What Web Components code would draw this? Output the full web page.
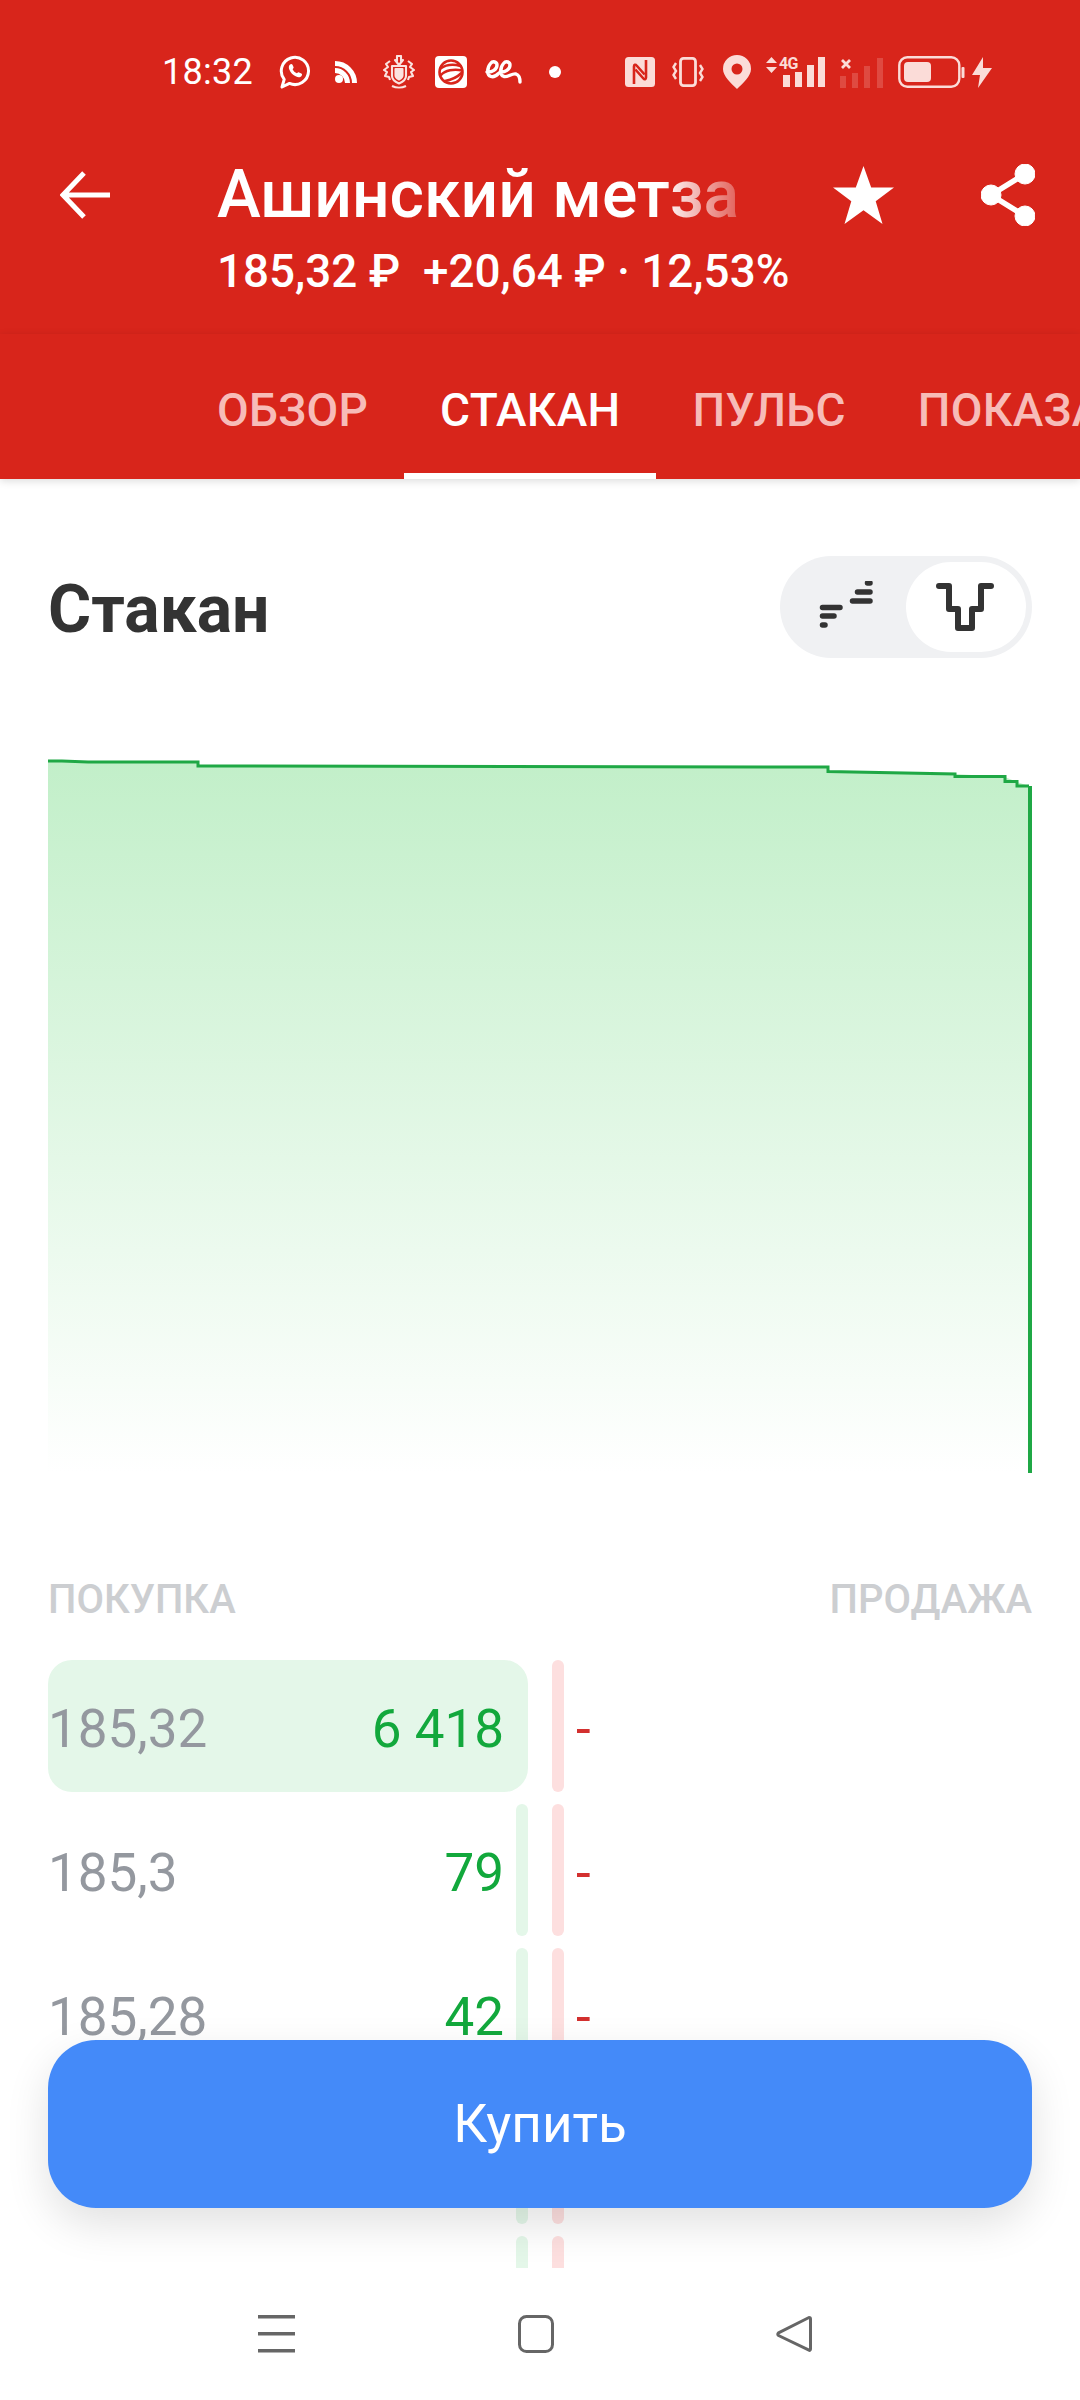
<!DOCTYPE html>
<html lang="ru">
<head>
<meta charset="utf-8">
<title>Стакан</title>
<style>
  html, body { margin: 0; padding: 0; background: #fff; }
  body { width: 1080px; height: 2400px; overflow: hidden; font-family: Roboto, "Liberation Sans", sans-serif; }
</style>
</head>
<body>
<stock-screen>
  <status-bar></status-bar>
  <stock-header name="Ашинский метза" quote="185,32 ₽&#160;&#160;+20,64 ₽ · 12,53%"></stock-header>
  <tab-bar tabs="ОБЗОР,СТАКАН,ПУЛЬС,ПОКАЗА" active="1"></tab-bar>
  <book-title>Стакан</book-title>
  <depth-chart></depth-chart>
  <order-book>
    <order-row price="185,32" qty="6 418" fill="100"></order-row>
    <order-row price="185,3" qty="79" fill="2.5"></order-row>
    <order-row price="185,28" qty="42" fill="2.5"></order-row>
    <order-row fill="2.5"></order-row>
    <order-row fill="2.5"></order-row>
  </order-book>
  <buy-button>Купить</buy-button>
  <nav-bar></nav-bar>
</stock-screen>

<script>
  class StockScreen extends HTMLElement {
    constructor() {
      super();
      this.attachShadow({ mode: 'open' });
      this.shadowRoot.innerHTML = `
        <style>
          :host { display: flex; flex-direction: column; position: relative; width: 1080px; height: 2400px; overflow: hidden; background: #fff; }
        </style>
        <slot></slot>`;
    }
  }

  class StatusBar extends HTMLElement {
    constructor() {
      super();
      this.attachShadow({ mode: 'open' });
      this.shadowRoot.innerHTML = `
        <style>
          :host { display: flex; align-items: center; height: 150px; padding: 0 0 6px 162px; box-sizing: border-box; background: #d8251b; color: #fff; }
          .bar { display: flex; align-items: center; }
          .time { font: 400 36px/1 Roboto, sans-serif; width: 90px; letter-spacing: .3px; }
          svg { display: block; flex: none; }
          .pale { color: #fbdcd8; }
        </style>
        <div class="bar">
          <span class="time">18:32</span>
          <!-- whatsapp -->
          <svg style="margin-left:27px" width="32" height="34" viewBox="0 0 32 34" fill="none" stroke="#fff">
            <path d="M3 32l2.200-7.700A13.600 13.600 0 1 1 10.500 28.400z" stroke-width="3" stroke-linejoin="round"/>
            <path d="M11 9.500c1-.9 2-.8 2.500.2l1 2.300c.3.700 0 1.200-.9 2.200.9 1.800 2.300 3.200 4.300 4.100 1-.9 1.600-1.300 2.200-.9l2.300 1.200c.8.500.9 1.300.2 2.300-1.300 1.600-3.300 1.700-5.500.700-3.200-1.400-5.600-3.900-6.800-7-.7-2-.7-3.700.7-5.100z" fill="#fff" stroke="none"/>
          </svg>
          <!-- feed -->
          <svg style="margin-left:24px" width="22" height="22" viewBox="0 0 22 22" fill="none" stroke="#fff" stroke-width="5">
            <circle cx="4" cy="18" r="4" fill="#fff" stroke="none"/>
            <path d="M0 9.500a12.500 12.500 0 0 1 12.500 12.500"/>
            <path d="M0 2.500a19.500 19.500 0 0 1 19.500 19.500"/>
          </svg>
          <!-- bank crest -->
          <svg style="margin-left:26px" width="32" height="34" viewBox="0 0 32 34" fill="none" stroke="#fbe3e0" stroke-width="2.100" stroke-linejoin="round">
            <path d="M14 1h4v5l2-1-4 5-4-5 2 1z"/>
            <path d="M9 11h14v10c0 4-3.500 6-7 7.500-3.500-1.500-7-3.500-7-7.500z"/>
            <path d="M12.500 14h7v6.500c0 2-1.800 3-3.500 4-1.700-1-3.500-2-3.500-4z" fill="#fbe3e0"/>
            <path d="M7 6L3 9l2 3-4 3 3 2-2 4 4 1 1 3M25 6l4 3-2 3 4 3-3 2 2 4-4 1-1 3"/>
            <path d="M9 31c4 2 10 2 14 0"/>
          </svg>
          <!-- ball tile -->
          <svg style="margin-left:20px" width="32" height="32" viewBox="0 0 32 32">
            <rect width="32" height="32" rx="4" fill="#fff"/>
            <g fill="none" stroke="#d8251b" stroke-width="2.600" stroke-linecap="round">
              <circle cx="16" cy="16" r="11.500"/>
              <path d="M5.500 12.500c5-3.500 13-4.500 20-2.500"/>
              <path d="M6 19c4-4.500 13-6.500 21-4.500"/>
              <path d="M10 25c5-1 12-3.500 16.500-8"/>
            </g>
          </svg>
          <!-- script logo -->
          <svg style="margin-left:18px" width="37" height="26" viewBox="0 0 37 26" fill="none" stroke="#fff" stroke-width="3.400" stroke-linecap="round" stroke-linejoin="round">
            <path d="M2 13c5 .5 10-2.500 10-7 0-3-4-4.500-6.500-1.500C2 8.500 1.500 16 6 17.500c3 1 5.500-1 7.500-3"/>
            <path d="M15 13c5 .5 10-2.500 10-7 0-3-4-4.500-6.500-1.500C15 8.500 14.500 16 19 17.500c4 1 8-3.500 12-2.500 3 1 4 4 4 8"/>
          </svg>
          <svg style="margin-left:27px" width="12" height="12" viewBox="0 0 12 12"><circle cx="6" cy="6" r="6" fill="#fff"/></svg>
          <!-- nfc -->
          <svg class="pale" style="margin-left:64px" width="30" height="30" viewBox="0 0 30 30">
            <rect width="30" height="30" rx="3.500" fill="currentColor"/>
            <g fill="none" stroke="#d8251b" stroke-width="2.600">
              <path d="M9 27V9.500c0-1.800 1.500-2.300 2.600-1l8 9"/>
              <path d="M21 3v17.500c0 1.800-1.500 2.300-2.600 1l-8-9"/>
            </g>
          </svg>
          <!-- vibrate -->
          <svg class="pale" style="margin-left:17px" width="32" height="30" viewBox="0 0 32 30" fill="none" stroke="currentColor" stroke-width="2.800">
            <rect x="8.500" y="1.400" width="15" height="27.200" rx="3"/>
            <path d="M4 6L1.500 10 4 14 1.500 18 4 22M28 8l2.500 4-2.500 4 2.500 4-2.500 4" stroke-width="2.400"/>
          </svg>
          <!-- location -->
          <svg class="pale" style="margin-left:19px" width="28" height="34" viewBox="0 0 28 34">
            <path fill-rule="evenodd" fill="currentColor" d="M14 0a14 14 0 0 1 14 14c0 7-8 14.500-14 20C8 28.500 0 21 0 14A14 14 0 0 1 14 0zm0 8.500a5.500 5.500 0 1 0 0 11 5.500 5.500 0 0 0 0-11z"/>
          </svg>
          <!-- sim one -->
          <signal-mobile style="margin-left:15px"></signal-mobile>
          <!-- sim two, no service -->
          <svg style="margin-left:14px" width="43" height="32" viewBox="0 0 43 32">
            <g fill="#fbdcd8" opacity=".2">
              <rect x="0" y="20" width="6" height="12"/><rect x="12" y="17" width="6" height="15"/><rect x="24" y="10" width="6" height="22"/><rect x="37" y="2" width="6" height="30"/>
            </g>
            <path d="M2 4l8 8M10 4l-8 8" stroke="#fbdcd8" stroke-width="2.800"/>
          </svg>
          <!-- battery -->
          <svg class="pale" style="margin-left:15px" width="68" height="32" viewBox="0 0 68 32">
            <rect x="1.300" y="1.300" width="60" height="29.400" rx="8" fill="none" stroke="currentColor" stroke-width="2.400"/>
            <rect x="6" y="6" width="27" height="20" rx="4" fill="currentColor"/>
            <rect x="63.500" y="11" width="3" height="11" rx="1" fill="currentColor"/>
          </svg>
          <svg class="pale" style="margin-left:6px" width="20" height="31" viewBox="0 0 20 31"><path fill="currentColor" d="M11 0L0 18h8l-2 13 14-20h-9z"/></svg>
        </div>`;
    }
  }

  // Data-type arrows, the 4G mark and the level bars of the first sim
  class SignalMobile extends HTMLElement {
    constructor() {
      super();
      this.attachShadow({ mode: 'open' });
      this.shadowRoot.innerHTML = `
        <style>
          :host { display: grid; grid-template-columns: 13px 47px; grid-template-rows: 13px 17px; width: 60px; height: 30px; color: #fbdcd8; flex: none; }
          .arrows { grid-row: 1 / 3; }
          .type { font: 700 16px/13px Roboto, sans-serif; letter-spacing: -.6px; grid-column: 2; grid-row: 1; }
          svg { display: block; }
          .bars { grid-column: 2; grid-row: 1 / 3; }
        </style>
        <svg class="arrows" width="11" height="16" viewBox="0 0 11 16" fill="currentColor"><path d="M5.500 0L11 6H0zM5.500 16L0 10h11z"/></svg>
        <span class="type">4G</span>
        <svg class="bars" width="47" height="30" viewBox="0 0 47 30" fill="currentColor">
          <rect x="4" y="18" width="7" height="12"/><rect x="16" y="15" width="7" height="15"/><rect x="28" y="8" width="7" height="22"/><rect x="39" y="0" width="7" height="30"/>
        </svg>`;
    }
  }

  class StockHeader extends HTMLElement {
    constructor() {
      super();
      this.attachShadow({ mode: 'open' });
    }
    connectedCallback() {
      this.shadowRoot.innerHTML = `
        <style>
          :host { display: grid; grid-template-columns: 217px 524px 92px 61px 146px 1fr; grid-template-rows: 90px 64px; height: 184px; align-content: start; background: #d8251b; color: #fff; font-family: Roboto, sans-serif; }
          .back { grid-row: 1; align-self: center; margin-left: 60px; }
          .name { font-size: 66px; font-weight: 500; line-height: 90px; white-space: nowrap; overflow: hidden; -webkit-mask-image: linear-gradient(90deg, #000 85%, rgba(0,0,0,.3) 99%); mask-image: linear-gradient(90deg, #000 85%, rgba(0,0,0,.3) 99%); }
          .quote { grid-column: 2 / 7; grid-row: 2; font-size: 45.800px; font-weight: 500; line-height: 64px; white-space: nowrap; }
          .star { grid-column: 4; grid-row: 1; align-self: center; }
          .share { grid-column: 5; grid-row: 1; align-self: center; margin-left: 87px; }
          svg { display: block; }
        </style>
        <svg class="back" width="50" height="48" viewBox="0 0 50 48" fill="none" stroke="#fff" stroke-width="5"><path d="M24 2L3 24l21 22M3 24h47"/></svg>
        <div class="name">${this.getAttribute('name')}</div>
        <svg class="star" width="61" height="58" viewBox="0 0 61 58"><path fill="#fff" d="M30.500 0l7.700 21.500H61L42.700 35.300 49.500 58 30.500 44.300 11.500 58l6.800-22.700L0 21.500h22.800z"/></svg>
        <svg class="share" width="54" height="62" viewBox="0 0 54 62" fill="#fff" stroke="#fff">
          <path d="M44 10L10 31l34 21" fill="none" stroke-width="5.500"/>
          <circle cx="44" cy="10" r="10"/><circle cx="10" cy="31" r="10"/><circle cx="44" cy="52" r="10"/>
        </svg>
        <div class="quote">${this.getAttribute('quote')}</div>`;
    }
  }

  class TabBar extends HTMLElement {
    constructor() {
      super();
      this.attachShadow({ mode: 'open' });
    }
    connectedCallback() {
      const active = Number(this.getAttribute('active'));
      const tabs = this.getAttribute('tabs').split(',').map((label, i) =>
        `<div class="tab${i === active ? ' on' : ''}">${label}</div>`).join('');
      this.shadowRoot.innerHTML = `
        <style>
          :host { display: flex; height: 145px; padding-left: 181px; overflow: hidden; background: #d8251b; box-shadow: 0 2px 8px rgba(0,0,0,.14); position: relative; z-index: 1; font-family: Roboto, sans-serif; }
          .tab { flex: none; box-sizing: border-box; height: 145px; padding: 50px 36px 0; font-size: 46px; font-weight: 500; line-height: 52px; letter-spacing: .3px; color: #f7bcb8; white-space: nowrap; border-bottom: 6px solid transparent; }
          .tab.on { color: #fff; border-bottom-color: #fff; }
        </style>
        ${tabs}`;
    }
  }

  class BookTitle extends HTMLElement {
    constructor() {
      super();
      this.attachShadow({ mode: 'open' });
      this.shadowRoot.innerHTML = `
        <style>
          :host { display: flex; justify-content: space-between; align-items: center; margin: 77px 48px 0; height: 102px; font: 700 66px/1 Roboto, sans-serif; color: #333; }
          .label { padding-top: 5px; }
          .toggle { display: flex; align-items: center; justify-content: space-between; width: 252px; height: 102px; box-sizing: border-box; padding: 6px; border-radius: 51px; background: #f0f1f3; }
          .mode { display: flex; align-items: center; justify-content: center; width: 120px; height: 90px; border-radius: 45px; }
          .mode.on { background: #fff; }
          svg { display: block; }
        </style>
        <div class="label"><slot></slot></div>
        <div class="toggle">
          <div class="mode">
            <svg width="56" height="52" viewBox="0 0 56 52" stroke="#333" stroke-width="5.500" stroke-linecap="round" fill="none">
              <path d="M4.500 26.500H22M4.500 35H16M4.500 44H7M34.500 20H52M39.500 11H52M49.500 2H52"/>
            </svg>
          </div>
          <div class="mode on">
            <svg width="58" height="48" viewBox="0 0 58 48" stroke="#333" stroke-width="6" stroke-linecap="round" stroke-linejoin="round" fill="none" style="margin-left:-2px">
              <path d="M3 3H13V26H22V45H36V26H45V3H55"/>
            </svg>
          </div>
        </div>`;
    }
  }

  class DepthChart extends HTMLElement {
    constructor() {
      super();
      this.attachShadow({ mode: 'open' });
      this.shadowRoot.innerHTML = `
        <style>
          :host { display: block; margin: 98px 48px 0; height: 720px; }
          svg { display: block; }
        </style>
        <svg width="984" height="720" viewBox="0 0 984 720">
          <defs>
            <linearGradient id="bidFill" x1="0" y1="0" x2="0" y2="1">
              <stop offset="0" stop-color="#c2efc9"/>
              <stop offset="1" stop-color="#ffffff"/>
            </linearGradient>
          </defs>
          <path fill="url(#bidFill)" d="M0 5L150 6 152 10 780 11 782 16 907 18 957 21 969 26 981 30V717H0z"/>
          <path fill="none" stroke="#1fa845" stroke-width="3" d="M0 5L14 5 40 6 150 6V10L780 11V15.500L907 18V20.500H957V25.500H969V30H981"/>
          <path fill="none" stroke="#1fa845" stroke-width="4" d="M982 30V717"/>
        </svg>`;
    }
  }

  class OrderBook extends HTMLElement {
    constructor() {
      super();
      this.attachShadow({ mode: 'open' });
      this.shadowRoot.innerHTML = `
        <style>
          :host { display: block; margin: 99px 48px 0; height: 693px; overflow: hidden; font-family: Roboto, sans-serif; }
          .heads { display: flex; justify-content: space-between; height: 47px; line-height: 49px; font-size: 40px; font-weight: 500; color: #ccced1; margin-bottom: 38px; }
          .rows { display: flex; flex-direction: column; gap: 12px; }
        </style>
        <div class="heads"><span>ПОКУПКА</span><span>ПРОДАЖА</span></div>
        <div class="rows"><slot></slot></div>`;
    }
  }

  class OrderRow extends HTMLElement {
    constructor() {
      super();
      this.attachShadow({ mode: 'open' });
    }
    connectedCallback() {
      const fill = this.getAttribute('fill');
      const price = this.getAttribute('price');
      // rows scrolled below the button only show their two bars
      const line = price ? `<div class="line"><span class="price">${price}</span><span class="qty">${this.getAttribute('qty')}</span></div>` : '';
      this.shadowRoot.innerHTML = `
        <style>
          :host { display: grid; grid-template-columns: 480px 12px 1fr; grid-template-rows: 132px; column-gap: 24px; flex: none; font: 400 53px/126px Roboto, sans-serif; }
          .bid { display: grid; }
          .depth, .line { grid-area: 1 / 1; }
          .depth { justify-self: end; width: ${fill}%; min-width: 12px; background: #e4f7e9; border-radius: ${fill > 50 ? 24 : 6}px; }
          .line { display: flex; justify-content: space-between; padding: 6px 24px 0 0; }
          .price { color: #94989f; }
          .qty { color: #12a83c; }
          .ask { background: #fddfdf; border-radius: 6px; }
          .none { color: #d3302f; margin-left: -12px; padding-top: 6px; }
        </style>
        <div class="bid">
          <div class="depth"></div>
          ${line}
        </div>
        <div class="ask"></div>
        ${price ? '<div class="none">-</div>' : ''}`;
    }
  }

  class BuyButton extends HTMLElement {
    constructor() {
      super();
      this.attachShadow({ mode: 'open' });
      this.shadowRoot.innerHTML = `
        <style>
          :host { display: flex; align-items: center; justify-content: center; position: absolute; left: 48px; top: 2040px; width: 984px; height: 168px; border-radius: 48px; background: #448af9; color: #fff; font: 400 53px/1 Roboto, sans-serif; box-shadow: 0 16px 44px rgba(0,0,0,.12); }
        </style>
        <slot></slot>`;
    }
  }

  class NavBar extends HTMLElement {
    constructor() {
      super();
      this.attachShadow({ mode: 'open' });
      this.shadowRoot.innerHTML = `
        <style>
          :host { display: flex; flex: 1; box-sizing: border-box; padding: 47px 0 0 258px; background: #fff; position: relative; }
          svg { display: block; flex: none; }
        </style>
        <svg width="37" height="38" viewBox="0 0 37 38" fill="#666"><rect y="0" width="37" height="3.500"/><rect y="17" width="37" height="3.500"/><rect y="34" width="37" height="3.500"/></svg>
        <svg style="margin-left:223px" width="36" height="38" viewBox="0 0 36 38" fill="none" stroke="#666" stroke-width="3"><rect x="1.500" y="1.500" width="33" height="35" rx="7"/></svg>
        <svg style="margin-left:222px" width="36" height="38" viewBox="0 0 36 38" fill="none" stroke="#666" stroke-width="3" stroke-linejoin="round"><path d="M33 2.500c1 0 1.500.5 1.500 1.500v30c0 1-.7 1.700-1.500 1.200L2.500 20.500c-.8-.8-.8-1.800 0-2.600z"/></svg>`;
    }
  }

  customElements.define('stock-screen', StockScreen);
  customElements.define('status-bar', StatusBar);
  customElements.define('signal-mobile', SignalMobile);
  customElements.define('stock-header', StockHeader);
  customElements.define('tab-bar', TabBar);
  customElements.define('book-title', BookTitle);
  customElements.define('depth-chart', DepthChart);
  customElements.define('order-book', OrderBook);
  customElements.define('order-row', OrderRow);
  customElements.define('buy-button', BuyButton);
  customElements.define('nav-bar', NavBar);
</script>
</body>
</html>
